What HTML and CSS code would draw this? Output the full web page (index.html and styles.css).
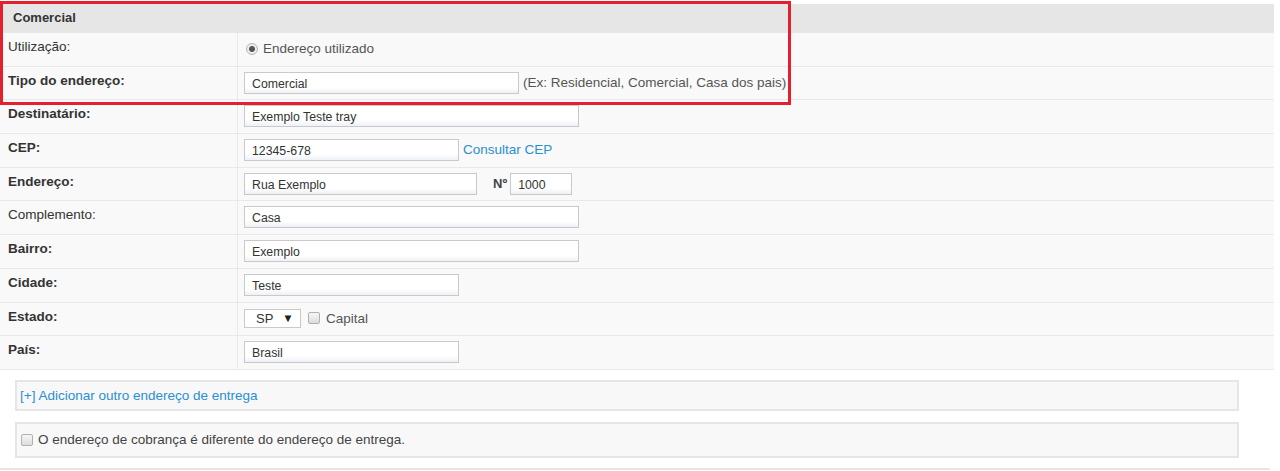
FILE: index.html
```html
<!DOCTYPE html>
<html lang="pt-BR">
<head>
	<title>Endereço</title>
	<meta charset="utf-8" />
	<link rel="stylesheet" href="styles.css">
</head>
<body>
	<div class="page">
		<div class="section-title">Comercial</div>
		<div class="form">
			<div class="row">
				<div class="label">Utilização:</div>
				<div class="field"><span class="radio"></span> Endereço utilizado</div>
			</div>
			<div class="row">
				<div class="label bold">Tipo do endereço:</div>
				<div class="field"><input class="input w-tipo" value="Comercial"><span class="hint">(Ex: Residencial, Comercial, Casa dos pais)</span></div>
			</div>
			<div class="row">
				<div class="label bold">Destinatário:</div>
				<div class="field"><input class="input w-long" value="Exemplo Teste tray"></div>
			</div>
			<div class="row">
				<div class="label bold">CEP:</div>
				<div class="field"><input class="input w-mid" value="12345-678"><a class="link" href="#">Consultar CEP</a></div>
			</div>
			<div class="row">
				<div class="label bold">Endereço:</div>
				<div class="field"><input class="input w-rua" value="Rua Exemplo"><span class="num-label">Nº</span><input class="input w-num" value="1000"></div>
			</div>
			<div class="row">
				<div class="label">Complemento:</div>
				<div class="field"><input class="input w-long" value="Casa"></div>
			</div>
			<div class="row">
				<div class="label bold">Bairro:</div>
				<div class="field"><input class="input w-long" value="Exemplo"></div>
			</div>
			<div class="row">
				<div class="label bold">Cidade:</div>
				<div class="field"><input class="input w-mid" value="Teste"></div>
			</div>
			<div class="row">
				<div class="label bold">Estado:</div>
				<div class="field"><span class="select">SP <span class="arrow">▼</span></span><span class="check"></span> Capital</div>
			</div>
			<div class="row">
				<div class="label bold">País:</div>
				<div class="field"><input class="input w-mid" value="Brasil"></div>
			</div>
		</div>

		<div class="box"><a class="link" href="#">[+] Adicionar outro endereço de entrega</a></div>
		<div class="box box-check"><span class="check"></span> O endereço de cobrança é diferente do endereço de entrega.</div>
		<div class="bottom-line"></div>

		<div class="highlight"></div>
	</div>
</body>
</html>
```
FILE: styles.css
```css
:root {
	--text-color: #333;
	--row-bg: #f9f9f9;
	--line-color: #e9e9e9;
	--link-color: #2a8fd0;
	--input-border: #c9c9c9;
}

* {
	box-sizing: border-box;
}

body {
	margin: 0;
	background: #fff;
	color: var(--text-color);
	font-family: "Liberation Sans", Arial, sans-serif;
	font-size: 13.5px;
}

.page {
	position: relative;
	padding-top: 4px;
	width: 1274px;
}

.section-title {
	height: 29px;
	padding: 6px 13px;
	background: #e6e6e6;
	font-weight: bold;
	font-size: 13px;
}

.row {
	display: grid;
	grid-template-columns: 238px 1fr;
	height: 33.7px;
	background: var(--row-bg);
	border-bottom: 1px solid var(--line-color);
}

.label {
	padding: 6px 8px;
	border-right: 1px solid var(--line-color);
}

.bold {
	font-weight: bold;
}

.field {
	display: flex;
	align-items: center;
	padding-left: 6px;
	padding-bottom: 1px;
	color: #555;
}

.input {
	height: 22px;
	margin: 0;
	padding: 2px 7px 0;
	border: 1px solid var(--input-border);
	border-radius: 0;
	background: linear-gradient(#fff 70%, #edf1f6);
	color: #333;
	font-family: inherit;
	font-size: 12.3px;
}

.w-tipo { width: 275px; }
.w-long { width: 335px; }
.w-mid { width: 215px; }
.w-rua { width: 233px; }
.w-num { width: 62px; }

.hint {
	margin-left: 4px;
	color: #555;
}

.link {
	color: var(--link-color);
	text-decoration: none;
}

.field .link {
	margin-left: 4px;
}

.num-label {
	margin: 0 3px 0 16px;
	font-weight: bold;
	color: #444;
	font-size: 13px;
}

.radio {
	display: inline-block;
	width: 12px;
	height: 12px;
	margin: 0 5px 0 2px;
	border: 1px solid #b5b5b5;
	border-radius: 50%;
	background: radial-gradient(circle, #555 0 2.5px, #eee 3.5px);
}

.select {
	display: inline-flex;
	align-items: center;
	width: 57px;
	height: 19px;
	padding-left: 11px;
	border: 1px solid #c9c9c9;
	background: #fff;
	color: #333;
	font-size: 13px;
}

.arrow {
	margin-left: 9px;
	font-size: 11.5px;
	color: #222;
}

.check {
	display: inline-block;
	width: 12px;
	height: 12px;
	margin: 0 6px 0 7px;
	border: 1px solid #b0b0b0;
	border-radius: 2px;
	background: linear-gradient(#f6f6f6, #dcdcdc);
}

.box {
	display: flex;
	align-items: center;
	width: 1224px;
	margin: 10px 0 0 15px;
	height: 31px;
	padding-left: 3px;
	background: #f8f8f8;
	border: 2px solid #e6e6e6;
}

.box-check {
	margin-top: 11px;
	height: 36px;
	padding-left: 0;
	color: #444;
}

.box-check .check {
	margin-left: 4px;
	margin-right: 5px;
}

.bottom-line {
	margin-top: 10px;
	height: 2px;
	width: 1270px;
	background: #e6e6e6;
}

.highlight {
	position: absolute;
	left: 0;
	top: 1px;
	width: 791px;
	height: 104px;
	border: 3px solid #e5202e;
}
```
